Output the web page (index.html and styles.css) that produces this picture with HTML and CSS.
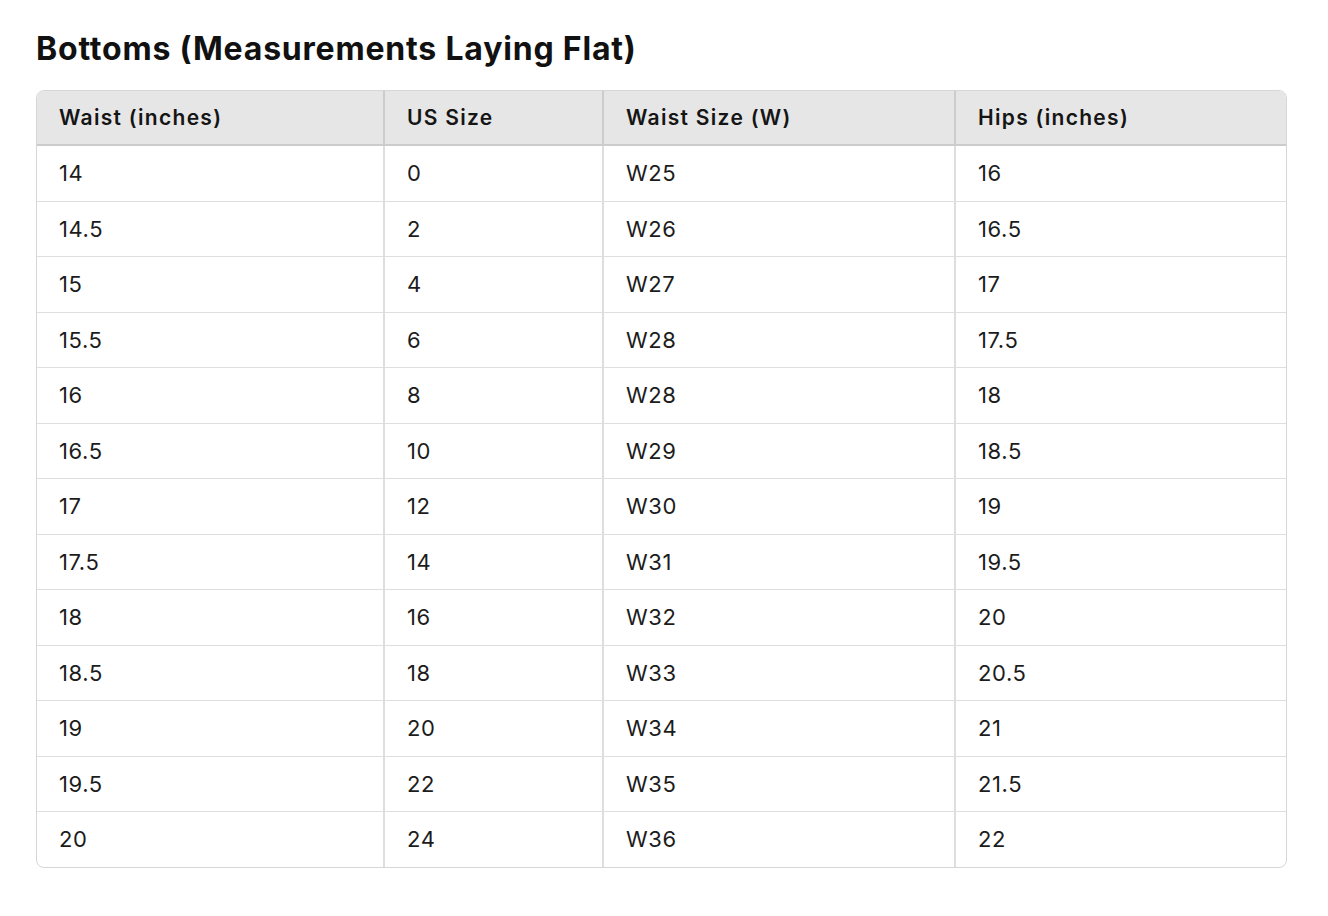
FILE: index.html
```html
<!DOCTYPE html>
<html>
<head>
<meta charset="utf-8">
<link rel="stylesheet" href="styles.css">
</head>
<body>
<main class="page">
  <h2 class="title">Bottoms (Measurements Laying Flat)</h2>
  <div class="table-wrap">
    <table class="size-table">
      <colgroup>
        <col class="c1"><col class="c2"><col class="c3"><col class="c4">
      </colgroup>
      <thead>
        <tr><th>Waist (inches)</th><th>US Size</th><th>Waist Size (W)</th><th>Hips (inches)</th></tr>
      </thead>
      <tbody>
        <tr><td>14</td><td>0</td><td>W25</td><td>16</td></tr>
        <tr><td>14.5</td><td>2</td><td>W26</td><td>16.5</td></tr>
        <tr><td>15</td><td>4</td><td>W27</td><td>17</td></tr>
        <tr><td>15.5</td><td>6</td><td>W28</td><td>17.5</td></tr>
        <tr><td>16</td><td>8</td><td>W28</td><td>18</td></tr>
        <tr><td>16.5</td><td>10</td><td>W29</td><td>18.5</td></tr>
        <tr><td>17</td><td>12</td><td>W30</td><td>19</td></tr>
        <tr><td>17.5</td><td>14</td><td>W31</td><td>19.5</td></tr>
        <tr><td>18</td><td>16</td><td>W32</td><td>20</td></tr>
        <tr><td>18.5</td><td>18</td><td>W33</td><td>20.5</td></tr>
        <tr><td>19</td><td>20</td><td>W34</td><td>21</td></tr>
        <tr><td>19.5</td><td>22</td><td>W35</td><td>21.5</td></tr>
        <tr><td>20</td><td>24</td><td>W36</td><td>22</td></tr>
      </tbody>
    </table>
  </div>
</main>
</body>
</html>
```
FILE: styles.css
```css
html, body {
  margin: 0;
  padding: 0;
  background: #ffffff;
}
body {
  font-family: Inter, "Noto Sans", "Liberation Sans", sans-serif;
  color: #1a1a1a;
}
.page {
  padding: 29px 42px 0 36px;
}
.title {
  margin: 0 0 21px 0;
  font-size: 32px;
  line-height: 40px;
  font-weight: 700;
  color: #111111;
  letter-spacing: 0.8px;
}
.table-wrap {
  box-sizing: border-box;
  width: 1251px;
  border: 1px solid #d6d6d6;
  border-radius: 8px;
  overflow: hidden;
}
.size-table {
  width: 100%;
  border-collapse: collapse;
  table-layout: fixed;
  font-size: 22px;
  letter-spacing: 0.6px;
}
.c1 { width: 347px; }
.c2 { width: 219px; }
.c3 { width: 352px; }
.c4 { width: 331px; }
.size-table th {
  background: #e6e6e6;
  text-align: left;
  font-size: 21px;
  font-weight: 600;
  letter-spacing: 1.3px;
  height: 53px;
  padding: 0 22px;
  border-bottom: 2px solid #cccccc;
  border-left: 2px solid #cccccc;
  color: #151515;
}
.size-table td {
  height: 54.5px;
  padding: 0 22px;
  border-top: 1px solid #dedede;
  border-left: 2px solid #dedede;
  color: #1c1c1c;
}
.size-table th:first-child,
.size-table td:first-child {
  border-left: none;
}
.size-table tbody tr:first-child td {
  border-top: none;
}
```
